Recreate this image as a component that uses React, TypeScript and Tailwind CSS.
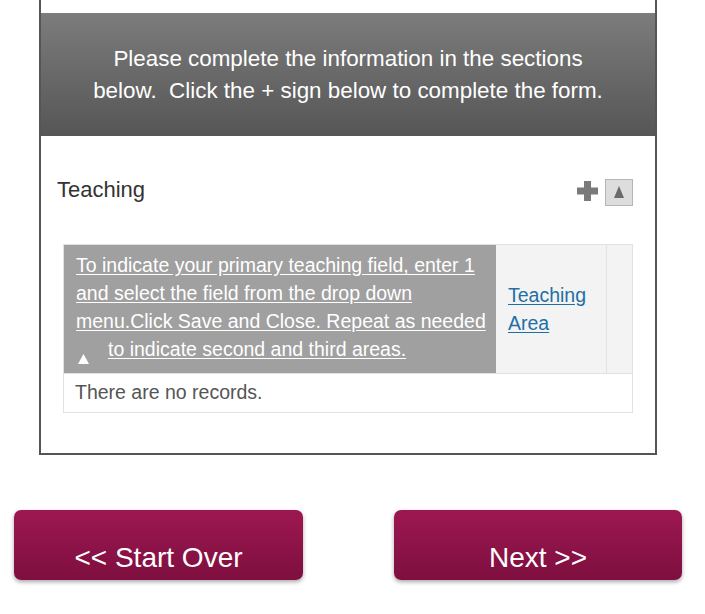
import { useState } from 'react'

const instructions = [
  'To indicate your primary teaching field, enter 1',
  'and select the field from the drop down',
  'menu.Click Save and Close. Repeat as needed',
]

function PlusIcon() {
  return (
    <svg width="21" height="20" viewBox="0 0 21 20" className="-mt-[3px] shrink-0">
      <path d="M7 0h7v6.5h7v7h-7V20H7v-6.5H0v-7h7z" fill="#7a7a7a" />
    </svg>
  )
}

export default function App() {
  const [open, setOpen] = useState(true)

  return (
    <div className="min-h-screen bg-white font-['Liberation_Sans',Arial,sans-serif]">
      <div className="ml-[39px] w-[618px] border-x-2 border-b-2 border-[#555555] pt-[13px] pb-[40px]">
        <div className="flex h-[123px] items-center justify-center bg-gradient-to-b from-[#7c7c7c] to-[#565656] px-4 text-center text-[22.4px] leading-[32px] text-white">
          <p>
            Please complete the information in the sections
            <br />
            below.&nbsp; Click the + sign below to complete the form.
          </p>
        </div>

        <div className="mt-[42px] flex h-[28px] items-center justify-between pl-[16px] pr-[22px]">
          <h3 className="-mt-[5px] text-[22px] text-[#333333]">Teaching</h3>
          <div className="flex items-center gap-[7px]">
            <PlusIcon />
            <button
              onClick={() => setOpen(!open)}
              className="flex h-[27px] w-[28px] items-center justify-center border border-[#b5b5b5] bg-[#dddddd]"
            >
              <svg width="10" height="12" viewBox="0 0 10 12">
                <path d="M5 0L10 12H0z" fill="#6a6a6a" />
              </svg>
            </button>
          </div>
        </div>

        <div className="mx-[22px] mt-[38px] border border-[#e2e2e2]">
          <div className="flex h-[128px]">
            <div className="w-[432px] bg-[#a0a0a0] pl-[12px] pt-[6px] text-[19.5px] leading-[28px] text-white">
              {instructions.map((line) => (
                <div key={line} className="whitespace-nowrap">
                  <a href="#" className="underline underline-offset-2">
                    {line}
                  </a>
                </div>
              ))}
              <div className="flex items-end whitespace-nowrap">
                <svg width="11" height="10" viewBox="0 0 11 10" className="-mb-[1px] ml-[2px] mr-[19px] shrink-0">
                  <path d="M5.5 0L11 10H0z" fill="#ffffff" />
                </svg>
                <a href="#" className="underline underline-offset-2">
                  to indicate second and third areas.
                </a>
              </div>
            </div>
            <div className="flex w-[110px] items-center bg-[#f3f3f3] pl-[12px] text-[19.5px] leading-[28px]">
              <a href="#" className="text-[#1f6fa3] underline underline-offset-2">
                Teaching
                <br />
                Area
              </a>
            </div>
            <div className="flex-1 border-l border-[#e2e2e2] bg-[#f3f3f3]" />
          </div>
          <div className="flex h-[39px] items-center border-t border-[#e2e2e2] pl-[11px] text-[19.5px] text-[#555555]">
            There are no records.
          </div>
        </div>
      </div>

      <div className="mt-[55px] flex">
        <button className="ml-[14px] h-[70px] w-[289px] rounded-[7px] bg-gradient-to-b from-[#9d1751] to-[#7e0f3f] pt-[26px] text-[28px] leading-[32px] text-white shadow-[0_2px_4px_rgba(0,0,0,0.35)]">
          &lt;&lt; Start Over
        </button>
        <button className="ml-[91px] h-[70px] w-[288px] rounded-[7px] bg-gradient-to-b from-[#9d1751] to-[#7e0f3f] pt-[26px] text-[28px] leading-[32px] text-white shadow-[0_2px_4px_rgba(0,0,0,0.35)]">
          Next &gt;&gt;
        </button>
      </div>
    </div>
  )
}
